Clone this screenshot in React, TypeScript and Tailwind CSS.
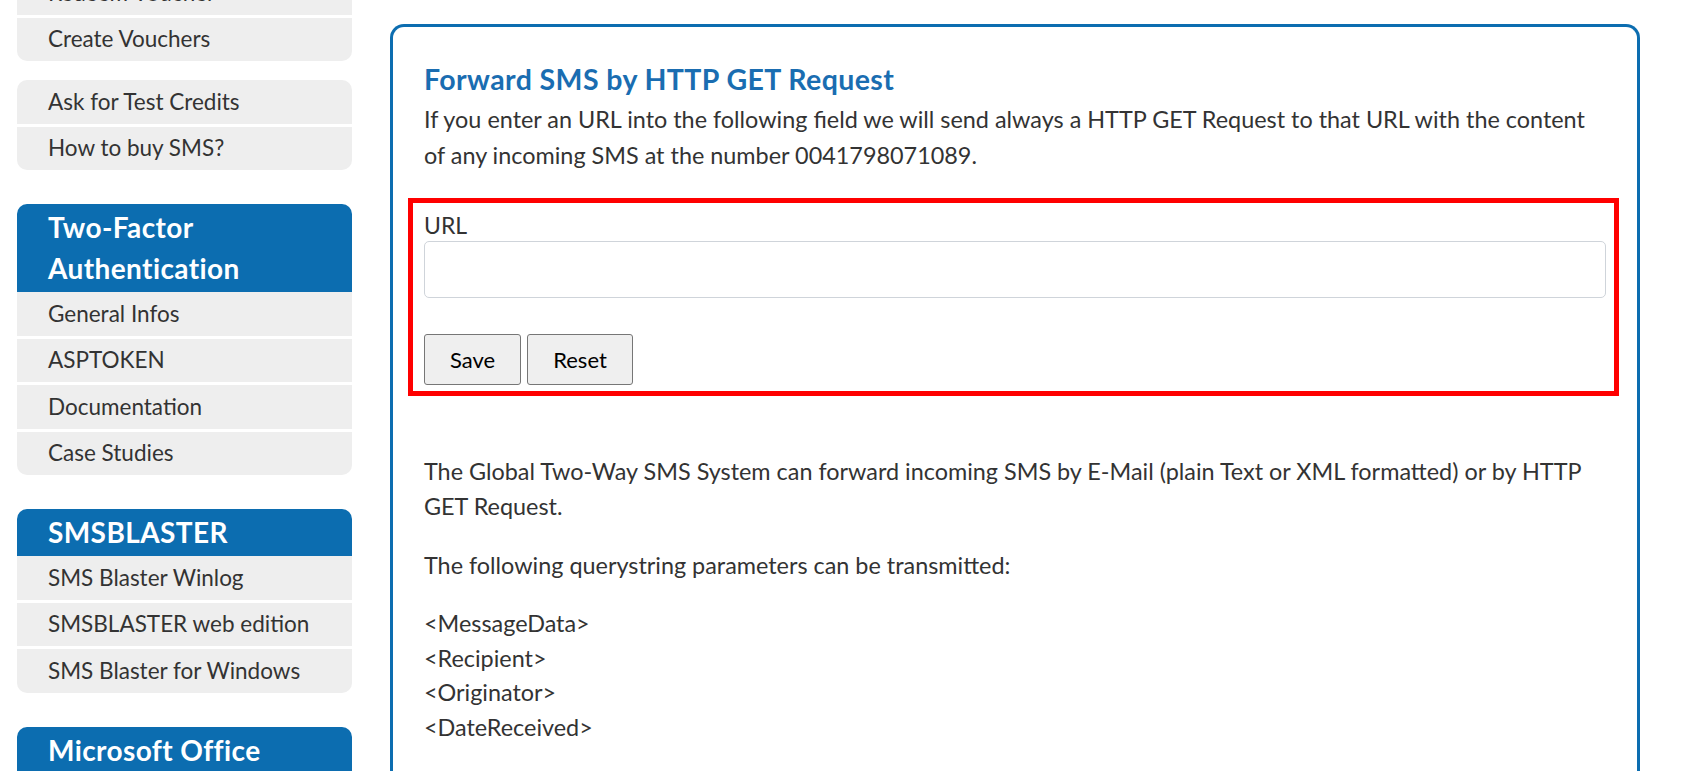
import React from "react";

const Item = ({ label }: { label: string }) => (
  <div className="flex h-[43.5px] items-center bg-[#eeeeee] pl-[31px] text-[22.5px] text-[#333333]">
    {label}
  </div>
);

const Group = ({ header, items, className = "" }: { header?: React.ReactNode; items: string[]; className?: string }) => (
  <div className={"overflow-hidden rounded-[10px] " + className}>
    {header && (
      <div className="bg-[#0c6db0] py-[3px] pl-[31px] text-[28px] font-bold leading-[41px] tracking-[0.4px] text-white">
        {header}
      </div>
    )}
    <div className="flex flex-col gap-[3px]">
      {items.map((i) => (
        <Item key={i} label={i} />
      ))}
    </div>
  </div>
);

export default function App() {
  return (
    <div className="flex h-[771px] w-[1688px] items-start overflow-hidden bg-white font-[Lato,sans-serif] text-[#333333]">
      <aside className="-mt-[29px] ml-[17px] flex w-[335px] shrink-0 flex-col">
        <Group items={["Redeem Voucher", "Create Vouchers"]} />
        <Group className="mt-[19px]" items={["Ask for Test Credits", "How to buy SMS?"]} />
        <Group
          className="mt-[34px]"
          header={
            <>
              Two-Factor
              <br />
              Authentication
            </>
          }
          items={["General Infos", "ASPTOKEN", "Documentation", "Case Studies"]}
        />
        <Group
          className="mt-[34px]"
          header="SMSBLASTER"
          items={["SMS Blaster Winlog", "SMSBLASTER web edition", "SMS Blaster for Windows"]}
        />
        <Group className="mt-[34px]" header="Microsoft Office" items={["Office Add-In", "Outlook SMS"]} />
      </aside>

      <main className="ml-[38px] mt-[24px] h-[820px] w-[1250px] shrink-0 rounded-t-[14px] border-[3px] border-b-0 border-[#0c6db0] px-[31px] pt-[36px]">
        <h2 className="text-[28.5px] font-bold leading-[32px] tracking-[0.4px] text-[#1a6db1]">
          Forward SMS by HTTP GET Request
        </h2>
        <p className="mt-[7px] text-[23.4px] leading-[35.5px]">
          <span className="block whitespace-nowrap">
            If you enter an URL into the following field we will send always a HTTP GET Request to that URL with the content
          </span>
          <span className="block whitespace-nowrap">of any incoming SMS at the number 0041798071089.</span>
        </p>

        <div className="-ml-[16px] -mr-[13px] mt-[25px] border-[5px] border-[#ff0000] pb-[6px] pl-[11px] pr-[8px] pt-[6px]">
          <div className="h-[32px] text-[23px] leading-[32px]">URL</div>
          <input
            type="text"
            className="block h-[57px] w-full rounded-[5px] border border-[#cfd4da] bg-white px-3 text-[22px] outline-none"
          />
          <div className="mt-[36px] flex gap-[6px]">
            <button className="h-[51px] w-[97px] rounded-[3px] border border-[#767676] bg-[#efefef] text-[22px] text-black">
              Save
            </button>
            <button className="h-[51px] w-[106px] rounded-[3px] border border-[#767676] bg-[#efefef] text-[22px] text-black">
              Reset
            </button>
          </div>
        </div>

        <div className="mt-[58px] text-[23.4px] leading-[34.5px]">
          <p>
            <span className="block whitespace-nowrap">
              The Global Two-Way SMS System can forward incoming SMS by E-Mail (plain Text or XML formatted) or by HTTP
            </span>
            <span className="block whitespace-nowrap">GET Request.</span>
          </p>
          <p className="mt-[24.5px]">The following querystring parameters can be transmitted:</p>
          <div className="mt-[24px]">
            <div>&lt;MessageData&gt;</div>
            <div>&lt;Recipient&gt;</div>
            <div>&lt;Originator&gt;</div>
            <div>&lt;DateReceived&gt;</div>
          </div>
        </div>
      </main>
    </div>
  );
}
